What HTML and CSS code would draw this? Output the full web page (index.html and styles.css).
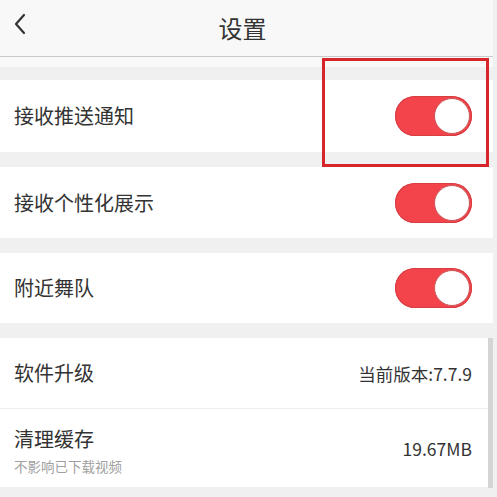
FILE: index.html
```html
<!DOCTYPE html>
<html lang="zh-CN">
<head>
<meta charset="utf-8">
<title>设置</title>
<link rel="stylesheet" href="styles.css">
</head>
<body>
<div class="page">
  <header class="topbar">
    <span class="back">
      <svg width="14" height="22" viewBox="0 0 14 22"><path d="M11 2 L3 11 L11 20" fill="none" stroke="#333" stroke-width="2.2" stroke-linecap="round" stroke-linejoin="round"/></svg>
    </span>
    <h1 class="title">设置</h1>
  </header>
  <div class="band band-first"></div>
  <div class="row r1">
    <span class="label">接收推送通知</span>
    <span class="toggle"><span class="knob"></span></span>
  </div>
  <div class="band"></div>
  <div class="row r2">
    <span class="label">接收个性化展示</span>
    <span class="toggle"><span class="knob"></span></span>
  </div>
  <div class="band"></div>
  <div class="row r3">
    <span class="label">附近舞队</span>
    <span class="toggle"><span class="knob"></span></span>
  </div>
  <div class="band"></div>
  <div class="row r4">
    <span class="label">软件升级</span>
    <span class="value">当前版本:7.7.9</span>
  </div>
  <div class="row r5">
    <div class="stack">
      <span class="label">清理缓存</span>
      <span class="sub">不影响已下载视频</span>
    </div>
    <span class="value">19.67MB</span>
  </div>
  <div class="highlight"></div>
  <div class="scrollbar"></div>
</div>
</body>
</html>
```
FILE: styles.css
```css
html, body {
  margin: 0;
  padding: 0;
  background: #f0f0f0;
  font-family: "Noto Sans CJK SC", "Noto Sans", sans-serif;
  color: #333;
}
.page {
  position: relative;
  width: 493px;
  height: 497px;
  overflow: hidden;
  background: #f0f0f0;
}
.topbar {
  position: relative;
  height: 56px;
  background: #f8f8f8;
  border-bottom: 1px solid #cacaca;
  display: flex;
  align-items: center;
  justify-content: center;
  padding-right: 8px;
}
.back {
  position: absolute;
  left: 13px;
  top: 13px;
  display: flex;
}
.title {
  margin: 0 0 2px;
  font-size: 24px;
  font-weight: 400;
  color: #333;
}
.band {
  height: 15px;
  background: #f0f0f0;
}
.band-first {
  height: 13px;
  border-top: 10px solid #f9f9f9;
}
.row {
  background: #fff;
  display: flex;
  align-items: center;
  justify-content: space-between;
  padding: 0 21px 0 14px;
}
.r1 { height: 72px; }
.r2 { height: 71px; }
.r3 { height: 70px; }
.r4 { height: 70px; border-bottom: 1px solid #eeeeee; }
.r5 { height: 78px; }
.label {
  font-size: 20px;
  line-height: 28px;
  color: #333;
}
.stack {
  display: flex;
  flex-direction: column;
  gap: 4px;
  padding-top: 4px;
}
.sub {
  font-size: 13.5px;
  line-height: 18px;
  color: #a0a0a0;
}
.value {
  font-size: 17.5px;
  color: #333;
}
.toggle {
  width: 77px;
  height: 40px;
  border-radius: 20px;
  background: #f2444a;
  box-shadow: inset 0 0 0 1px #d63e43;
  display: flex;
  align-items: center;
  justify-content: flex-end;
  padding-right: 2px;
  box-sizing: border-box;
}
.knob {
  width: 36px;
  height: 36px;
  border-radius: 50%;
  background: #fff;
  box-sizing: border-box;
  border: 1.5px solid #c9575a;
}
.highlight {
  position: absolute;
  left: 322px;
  top: 58px;
  width: 167px;
  height: 109px;
  box-sizing: border-box;
  border: 3px solid #d6262a;
}
.scrollbar {
  position: absolute;
  left: 488px;
  top: 338px;
  width: 5px;
  height: 150px;
  background: #d4d4d4;
}
```
